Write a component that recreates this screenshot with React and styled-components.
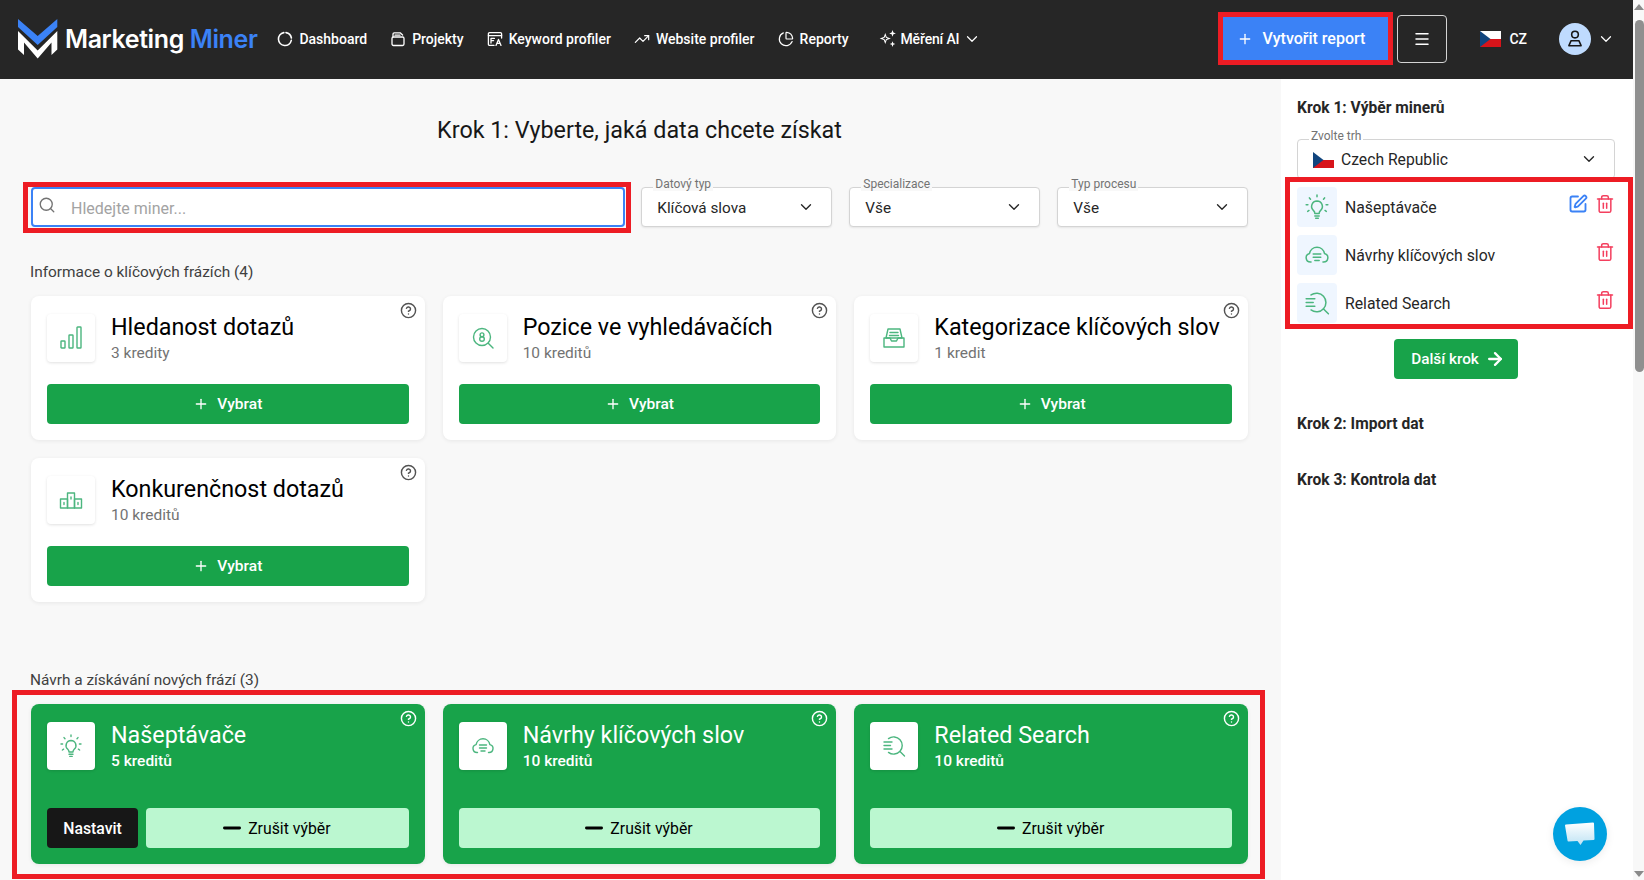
import React from "react";
import styled, { createGlobalStyle } from "styled-components";
import {
  ArrowRight,
  ChartPie,
  ChevronDown,
  CircleHelp,
  Menu,
  Minus,
  Plus,
  Search,
  SquarePen,
  Trash2,
  TrendingUp,
} from "lucide-react";

const GlobalStyle = createGlobalStyle`
  html, body {
    margin: 0;
    padding: 0;
    height: 100%;
    overflow: hidden;
    background: #f8f8f8;
    font-family: Roboto, "Noto Sans", sans-serif;
    color: #262626;
  }
  * { box-sizing: border-box; }
`;

const Page = styled.div`
  position: relative;
  display: flex;
  width: 1644px;
  height: 880px;
  overflow: hidden;
`;

const Shell = styled.div`
  flex: 1;
  min-width: 0;
  display: flex;
  flex-direction: column;
`;

const ScrollTrack = styled.div`
  width: 11px;
  display: flex;
  flex-direction: column;
  align-items: center;
  background: #f8f8f8;
  padding: 4px 0 3px 1px;
`;

const ScrollArrow = styled.div`
  width: 0;
  height: 0;
  border-left: 5px solid transparent;
  border-right: 5px solid transparent;
  ${(p) => (p.$down ? "border-top: 6px solid #8a8a8a; margin-top: auto;" : "border-bottom: 6px solid #8a8a8a;")}
`;

const ScrollThumb = styled.div`
  width: 9px;
  height: 352px;
  margin-top: 10px;
  background: #8f8f8f;
  border-radius: 5px;
`;

const Header = styled.header`
  height: 79px;
  flex-shrink: 0;
  background: #262626;
  display: flex;
  align-items: center;
  padding: 0 16px 2px 18px;
  color: #fff;
`;

const Logo = styled.div`
  display: flex;
  align-items: center;
  gap: 7px;
`;

const Wordmark = styled.span`
  font-family: Inter, sans-serif;
  font-size: 25px;
  font-weight: 600;
  letter-spacing: -0.4px;
  white-space: nowrap;
  color: #fff;

  b {
    font-weight: 600;
    color: #3b82f6;
  }
`;

const Nav = styled.nav`
  display: flex;
  align-items: center;
  gap: 23px;
  margin-left: 20px;
`;

const NavItem = styled.a`
  display: flex;
  align-items: center;
  gap: 6px;
  font-size: 14px;
  font-weight: 500;
  color: #fff;
  white-space: nowrap;
`;

const AiNavItem = styled(NavItem)`
  margin-left: 6px;
  gap: 4px;
  letter-spacing: -0.15px;
`;

const HeaderRight = styled.div`
  display: flex;
  align-items: center;
  margin-left: auto;
`;

const Framed = styled.div`
  position: relative;
  margin-top: ${(p) => p.$top || 0}px;

  &::after {
    content: "";
    position: absolute;
    inset: ${(p) => p.$inset};
    border: 5px solid #ed1c24;
    pointer-events: none;
    z-index: 2;
  }
`;

const CreateButton = styled.button`
  width: 166px;
  height: 43px;
  display: flex;
  align-items: center;
  justify-content: center;
  gap: 9px;
  padding: 0 10px 0 0;
  border: 0;
  background: #3b82f6;
  color: #fff;
  font-family: inherit;
  font-size: 16px;
  font-weight: 500;
`;

const MenuButton = styled.button`
  width: 50px;
  height: 48px;
  margin-left: 8px;
  display: flex;
  align-items: center;
  justify-content: center;
  background: transparent;
  border: 1px solid #d4d4d4;
  border-radius: 4px;
  color: #fff;
`;

const Lang = styled.div`
  display: flex;
  align-items: center;
  gap: 8px;
  margin-left: 33px;
  font-size: 14px;
  font-weight: 500;
`;

const Avatar = styled.div`
  width: 32px;
  height: 32px;
  margin-left: 32px;
  border-radius: 50%;
  background: #bfdbfe;
  display: flex;
  align-items: center;
  justify-content: center;
`;

const AvatarCaret = styled.div`
  display: flex;
  margin-left: 6px;
  margin-right: 2px;
`;

const Body = styled.div`
  flex: 1;
  min-height: 0;
  display: flex;
`;

const Main = styled.main`
  width: 1281px;
  flex-shrink: 0;
  padding: 35px 33px 0 31px;
  background: #f8f8f8;
`;

const PageTitle = styled.h1`
  margin: 0;
  text-align: center;
  font-size: 23.3px;
  line-height: 32px;
  font-weight: 400;
  color: #171717;
`;

const FilterRow = styled.div`
  display: grid;
  grid-template-columns: 593px repeat(3, 1fr);
  gap: 17.3px;
  margin-top: 41px;
`;

const SearchBox = styled.div`
  height: 40px;
  display: flex;
  align-items: center;
  gap: 15px;
  padding: 0 5px;
  background: #fff;
  border: 2px solid #3b82f6;
  border-radius: 4px;
  color: #737373;
  margin-right: -1px;

  svg {
    margin-top: -4px;
  }
`;

const SearchInput = styled.input`
  flex: 1;
  border: 0;
  outline: 0;
  padding: 2px 0 0;
  background: transparent;
  font-family: inherit;
  font-size: 16px;

  &::placeholder {
    color: #a3a3a3;
  }
`;

const SelectBox = styled.div`
  position: relative;
  height: 40px;
  display: flex;
  align-items: center;
  justify-content: space-between;
  padding: 0 16px 0 15px;
  background: #fff;
  border: 1px solid #d4d4d4;
  border-radius: 4px;
  box-shadow: 0 1px 2px rgba(0, 0, 0, 0.08);
  color: #262626;
`;

const SelectValue = styled.span`
  display: flex;
  align-items: center;
  gap: 7px;
  padding-top: 1px;
  font-size: ${(p) => p.$size || 15.3}px;
`;

const FloatLabel = styled.span`
  position: absolute;
  top: -10px;
  left: 11px;
  padding: 0 2px;
  background: ${(p) => p.$bg || "#f8f8f8"};
  font-size: 12px;
  line-height: 13px;
  color: #737373;
`;

const SectionLabel = styled.h2`
  margin: ${(p) => p.$top}px 0 14px -1px;
  font-size: 15.4px;
  line-height: 20px;
  font-weight: 400;
  color: #404040;
`;

const CardGrid = styled.div`
  display: grid;
  grid-template-columns: repeat(3, 1fr);
  gap: 18px;
`;

const Card = styled.article`
  position: relative;
  display: flex;
  flex-direction: column;
  height: ${(p) => (p.$selected ? 160 : 144)}px;
  padding: 18px 16px 16px;
  border-radius: 8px;
  background: ${(p) => (p.$selected ? "#18a34a" : "#fff")};
  color: ${(p) => (p.$selected ? "#fff" : "#000")};
  box-shadow: 0 1px 4px rgba(0, 0, 0, 0.07);
`;

const HelpMark = styled.span`
  position: absolute;
  top: 6px;
  right: 8px;
  display: flex;
  color: ${(p) => (p.$selected ? "#fff" : "#525252")};
`;

const CardHead = styled.div`
  display: flex;
  gap: 16px;
`;

const IconTile = styled.div`
  width: 48px;
  height: 48px;
  flex-shrink: 0;
  display: flex;
  align-items: center;
  justify-content: center;
  background: #fff;
  border-radius: 4px;
  box-shadow: 0 1px 3px rgba(0, 0, 0, 0.12);
`;

const CardTitle = styled.h3`
  margin: 0;
  font-size: 23.3px;
  line-height: 26px;
  font-weight: 400;
  white-space: nowrap;
`;

const Credits = styled.p`
  margin: 3px 0 0;
  font-size: 15.5px;
  line-height: 20px;
  font-weight: ${(p) => (p.$selected ? 500 : 400)};
  color: ${(p) => (p.$selected ? "#fff" : "#737373")};
`;

const CardActions = styled.div`
  display: flex;
  gap: 8px;
  margin-top: auto;
`;

const ActionButton = styled.button`
  flex: ${(p) => (p.$fixed ? "0 0 91px" : 1)};
  height: 40px;
  display: flex;
  align-items: center;
  justify-content: center;
  gap: 8px;
  border: 0;
  border-radius: 4px;
  font-family: inherit;
  font-size: ${(p) => (p.$tone ? 15.8 : 15.5)}px;
  font-weight: ${(p) => (p.$tone === "light" ? 400 : 500)};
  color: ${(p) => (p.$tone === "light" ? "#000" : "#fff")};
  background: ${(p) =>
    p.$tone === "light" ? "#bbf7d0" : p.$tone === "dark" ? "#171717" : "#18a34a"};
`;

const Dash = styled(Minus)`
  margin: 0 -5px;
`;

const Sidebar = styled.aside`
  flex: 1;
  padding: 19px 18px 0 16px;
  background: #fff;
`;

const StepTitle = styled.h2`
  margin: ${(p) => p.$top || 0}px 0 0;
  font-size: 15.6px;
  line-height: 20px;
  font-weight: 700;
  color: #262626;
`;

const MarketSelect = styled(SelectBox)`
  margin-top: 21px;
  box-shadow: none;
`;

const MinerList = styled.ul`
  list-style: none;
  margin: 0;
  padding: 0;
  display: flex;
  flex-direction: column;
  gap: 8px;
`;

const MinerRow = styled.li`
  display: flex;
  align-items: center;
  gap: 8px;
  height: 40px;
  font-size: 15.8px;
  color: #262626;
`;

const MinerName = styled.span`
  padding-top: 1px;
`;

const MinerIcon = styled.div`
  width: 40px;
  height: 40px;
  display: flex;
  align-items: center;
  justify-content: center;
  background: #eff6ff;
  border-radius: 4px;
`;

const MinerActions = styled.div`
  display: flex;
  gap: 7px;
  margin-left: auto;
  margin-top: -7px;
`;

const NextButton = styled.button`
  display: flex;
  align-items: center;
  justify-content: center;
  gap: 6px;
  width: 124px;
  height: 40px;
  margin: 16px auto 0;
  padding: 0 0 0 4px;
  border: 0;
  border-radius: 4px;
  background: #18a34a;
  color: #fff;
  font-family: inherit;
  font-size: 15.3px;
  font-weight: 500;
`;

const ChatBubble = styled.div`
  position: absolute;
  left: 1553px;
  top: 807px;
  width: 54px;
  height: 54px;
  border-radius: 50%;
  background: #00a1e0;
  box-shadow: 0 2px 8px rgba(0, 0, 0, 0.08);
  display: flex;
  align-items: center;
  justify-content: center;
`;

const GREEN = "#4cb67f";

const Glyph = ({ size = 24, children }) => (
  <svg width={size} height={size} viewBox="0 0 24 24" fill="none" stroke={GREEN} strokeWidth="1.4" strokeLinecap="round" strokeLinejoin="round">
    {children}
  </svg>
);

const BarsIcon = (p) => (
  <Glyph {...p}>
    <rect x="2" y="15" width="4" height="7" rx="0.6" />
    <rect x="10" y="9" width="4" height="13" rx="0.6" />
    <rect x="18" y="1" width="4" height="21" rx="0.6" />
  </Glyph>
);

const RankIcon = (p) => (
  <Glyph {...p}>
    <circle cx="11" cy="11" r="8.5" />
    <circle cx="11" cy="8.8" r="1.9" />
    <circle cx="11" cy="13" r="2.3" />
    <path d="M17.5 17.5 22 22" />
  </Glyph>
);

const TrayIcon = (p) => (
  <Glyph {...p}>
    <path d="M6 3h12l2 9H4z" />
    <path d="M8 6.5h8M7.5 9.5h9" />
    <path d="M2 12h6l1.5 3h5l1.5-3h6v9H2z" />
  </Glyph>
);

const PodiumIcon = (p) => (
  <Glyph {...p}>
    <rect x="8.5" y="5" width="7" height="15" />
    <rect x="1.5" y="11" width="7" height="9" />
    <rect x="15.5" y="11" width="7" height="9" />
    <path d="M12 9v2M5 14.5v2M19 14.5v2" />
  </Glyph>
);

const BulbIcon = (p) => (
  <Glyph {...p}>
    <path d="M12 6.5a5 5 0 0 0-3.2 8.8c.8.7 1.2 1.5 1.2 2.7h4c0-1.2.4-2 1.2-2.7A5 5 0 0 0 12 6.5z" />
    <path d="M10 20.2h4M10.8 22.4h2.4" />
    <path d="M12 1v1.6M5 3.6l1 1.2M19 3.6l-1 1.2M2 10h1.6M20.4 10H22M3.4 16l1.2-.8M20.6 16l-1.2-.8" />
  </Glyph>
);

const CloudIcon = (p) => (
  <Glyph {...p}>
    <path d="M6.5 18.5H6a4 4 0 0 1-.9-7.9 7 7 0 0 1 13.8 0 4 4 0 0 1-.9 7.9h-.5" />
    <path d="M8.5 11h7M8.5 14h7M10 17h4" />
  </Glyph>
);

const ListSearchIcon = (p) => (
  <Glyph {...p}>
    <path d="M6.5 4.6A8.6 8.6 0 1 1 6.5 18.4" />
    <path d="M2 8h8M2 11.5h6.5M2 15h8M18 17.5l4.5 4.5" />
  </Glyph>
);

const LogoMark = () => (
  <svg width="40" height="48" viewBox="6 6 40 42">
    <path fill="#3b82f6" d="M6 7 25.7 24 45.3 7v8L25.7 33 6 15z" />
    <path fill="#fff" d="M6 19 25.7 38.5 45.3 19v18.5L39.5 43V30.5L25.7 46.5 12 30.5V43L6 37.5z" />
  </svg>
);

const NavSvg = ({ children }) => (
  <svg width="16" height="16" viewBox="0 0 16 16" fill="none" stroke="#fff" strokeWidth="1.3" strokeLinecap="round" strokeLinejoin="round">
    {children}
  </svg>
);

const DashboardIcon = () => (
  <NavSvg>
    <path d="M9 1.6A6.5 6.5 0 0 1 14.4 7M14.3 9.4A6.5 6.5 0 1 1 6.8 1.6" strokeWidth="1.6" />
  </NavSvg>
);

const ProjectsIcon = () => (
  <NavSvg>
    <path d="M3 6V3a1.2 1.2 0 0 1 1.2-1.2h6L12.6 4" />
    <rect x="2" y="6" width="12" height="8.5" rx="1.4" />
    <path d="M5 4.2h5" />
  </NavSvg>
);

const KeywordIcon = () => (
  <NavSvg>
    <path d="M7 14.4H2.6A1.2 1.2 0 0 1 1.4 13.2V2.8a1.2 1.2 0 0 1 1.2-1.2h10.8a1.2 1.2 0 0 1 1.2 1.2V7" />
    <path d="M1.4 4.6h13.2M4 7.4h3.4M4 7.4v4.6M4 9.6h2.6M9 14.4l2.5-6 2.5 6M10 12.4h3" />
  </NavSvg>
);

const SparkIcon = () => (
  <svg width="19" height="19" viewBox="0 0 17 17" fill="#fff">
    <path d="M6.5 3.5 7.8 7.2 11.5 8.5 7.8 9.8 6.5 13.5 5.2 9.8 1.5 8.5 5.2 7.2zM6.5 6.2 5.9 7.9 4.2 8.5 5.9 9.1 6.5 10.8 7.1 9.1 8.8 8.5 7.1 7.9z" fillRule="evenodd" />
    <path d="M13 1l.8 2.2 2.2.8-2.2.8L13 7l-.8-2.2L10 4l2.2-.8zM13 11l.7 1.8 1.8.7-1.8.7L13 16l-.7-1.8-1.8-.7 1.8-.7z" />
  </svg>
);

const UserIcon = () => (
  <svg width="20" height="20" viewBox="0 0 18 18" fill="none" stroke="#171717" strokeWidth="1.4" strokeLinejoin="round">
    <circle cx="9" cy="5" r="3" />
    <path d="M5.5 10.5h7l2 4.5h-11z" />
  </svg>
);

const CzechFlag = ({ width = 21, height = 16 }) => (
  <svg width={width} height={height} viewBox="0 0 21 16">
    <rect width="21" height="8" fill="#fff" />
    <rect y="8" width="21" height="8" fill="#d7141a" />
    <path d="M0 0 10.5 8 0 16z" fill="#11457e" />
  </svg>
);

const ChatGlyph = () => (
  <svg width="32" height="28" viewBox="0 0 32 28">
    <defs>
      <linearGradient id="chatFill" x1="0" y1="0" x2="0" y2="1">
        <stop offset="0" stopColor="#ffffff" />
        <stop offset="1" stopColor="#bfe3f4" />
      </linearGradient>
    </defs>
    <path fill="url(#chatFill)" d="M2 4.5 29 2.5a1 1 0 0 1 1 1l.5 15.5a1 1 0 0 1-1 1L19.5 20.5 16.5 25l-3-4-9 .5a1 1 0 0 1-1-1L1 5.5a1 1 0 0 1 1-1z" />
  </svg>
);

const infoCards = [
  { title: "Hledanost dotazů", credits: "3 kredity", Icon: BarsIcon },
  { title: "Pozice ve vyhledávačích", credits: "10 kreditů", Icon: RankIcon },
  { title: "Kategorizace klíčových slov", credits: "1 kredit", Icon: TrayIcon },
  { title: "Konkurenčnost dotazů", credits: "10 kreditů", Icon: PodiumIcon },
];

const chosenCards = [
  { title: "Našeptávače", credits: "5 kreditů", Icon: BulbIcon, configurable: true },
  { title: "Návrhy klíčových slov", credits: "10 kreditů", Icon: CloudIcon },
  { title: "Related Search", credits: "10 kreditů", Icon: ListSearchIcon },
];

const navItems = [
  { label: "Dashboard", icon: <DashboardIcon /> },
  { label: "Projekty", icon: <ProjectsIcon /> },
  { label: "Keyword profiler", icon: <KeywordIcon /> },
  { label: "Website profiler", icon: <TrendingUp size={16} strokeWidth={1.8} /> },
  { label: "Reporty", icon: <ChartPie size={16} strokeWidth={1.8} /> },
];

const filters = [
  { label: "Datový typ", value: "Klíčová slova" },
  { label: "Specializace", value: "Vše" },
  { label: "Typ procesu", value: "Vše" },
];

const MinerCard = ({ title, credits, Icon, selected, configurable }) => (
  <Card $selected={selected}>
    <HelpMark $selected={selected}>
      <CircleHelp size={17} strokeWidth={2} />
    </HelpMark>
    <CardHead>
      <IconTile>
        <Icon />
      </IconTile>
      <div>
        <CardTitle>{title}</CardTitle>
        <Credits $selected={selected}>{credits}</Credits>
      </div>
    </CardHead>
    <CardActions>
      {selected ? (
        <>
          {configurable && (
            <ActionButton $tone="dark" $fixed>
              Nastavit
            </ActionButton>
          )}
          <ActionButton $tone="light">
            <Dash size={26} strokeWidth={2.6} />
            Zrušit výběr
          </ActionButton>
        </>
      ) : (
        <ActionButton>
          <Plus size={16} />
          Vybrat
        </ActionButton>
      )}
    </CardActions>
  </Card>
);

export default function App() {
  return (
    <Page>
      <GlobalStyle />
      <Shell>
        <Header>
          <Logo>
            <LogoMark />
            <Wordmark>
              Marketing <b>Miner</b>
            </Wordmark>
          </Logo>
          <Nav>
            {navItems.map((item) => (
              <NavItem key={item.label}>
                {item.icon}
                {item.label}
              </NavItem>
            ))}
            <AiNavItem>
              <SparkIcon />
              Měření AI
              <ChevronDown size={18} strokeWidth={1.6} />
            </AiNavItem>
          </Nav>
          <HeaderRight>
            <Framed $inset="-5px -4px -5px -5px">
              <CreateButton>
                <Plus size={16} />
                Vytvořit report
              </CreateButton>
            </Framed>
            <MenuButton>
              <Menu size={18} />
            </MenuButton>
            <Lang>
              <CzechFlag />
              CZ
            </Lang>
            <Avatar>
              <UserIcon />
            </Avatar>
            <AvatarCaret>
              <ChevronDown size={18} strokeWidth={1.6} />
            </AvatarCaret>
          </HeaderRight>
        </Header>
        <Body>
          <Main>
            <PageTitle>Krok 1: Vyberte, jaká data chcete získat</PageTitle>
            <FilterRow>
              <Framed $inset="-5px -7px -6px -8px">
                <SearchBox>
                  <Search size={18} strokeWidth={1.8} />
                  <SearchInput placeholder="Hledejte miner..." />
                </SearchBox>
              </Framed>
              {filters.map((f) => (
                <SelectBox key={f.label}>
                  <FloatLabel>{f.label}</FloatLabel>
                  <SelectValue>{f.value}</SelectValue>
                  <ChevronDown size={18} strokeWidth={1.8} />
                </SelectBox>
              ))}
            </FilterRow>
            <SectionLabel $top={35}>Informace o klíčových frázích (4)</SectionLabel>
            <CardGrid>
              {infoCards.map((c) => (
                <MinerCard key={c.title} {...c} />
              ))}
            </CardGrid>
            <SectionLabel $top={68}>Návrh a získávání nových frází (3)</SectionLabel>
            <Framed $inset="-14px -17px -15px -19px">
              <CardGrid>
                {chosenCards.map((c) => (
                  <MinerCard key={c.title} {...c} selected />
                ))}
              </CardGrid>
            </Framed>
          </Main>
          <Sidebar>
            <StepTitle>Krok 1: Výběr minerů</StepTitle>
            <MarketSelect>
              <FloatLabel $bg="#fff">Zvolte trh</FloatLabel>
              <SelectValue $size={15.7}>
                <CzechFlag />
                Czech Republic
              </SelectValue>
              <ChevronDown size={18} strokeWidth={1.8} />
            </MarketSelect>
            <Framed $inset="-10px -18px -6px -12px" $top={8}>
              <MinerList>
                {chosenCards.map(({ title, Icon, configurable }) => (
                  <MinerRow key={title}>
                    <MinerIcon>
                      <Icon size={26} />
                    </MinerIcon>
                    <MinerName>{title}</MinerName>
                    <MinerActions>
                      {configurable && <SquarePen size={20} color="#3b82f6" strokeWidth={2.2} />}
                      <Trash2 size={20} color="#f43f5e" strokeWidth={1.8} />
                    </MinerActions>
                  </MinerRow>
                ))}
              </MinerList>
            </Framed>
            <NextButton>
              Další krok
              <ArrowRight size={20} strokeWidth={2.8} />
            </NextButton>
            <StepTitle $top={35}>Krok 2: Import dat</StepTitle>
            <StepTitle $top={36}>Krok 3: Kontrola dat</StepTitle>
          </Sidebar>
        </Body>
      </Shell>
      <ScrollTrack>
        <ScrollArrow />
        <ScrollThumb />
        <ScrollArrow $down />
      </ScrollTrack>
      <ChatBubble>
        <ChatGlyph />
      </ChatBubble>
    </Page>
  );
}
